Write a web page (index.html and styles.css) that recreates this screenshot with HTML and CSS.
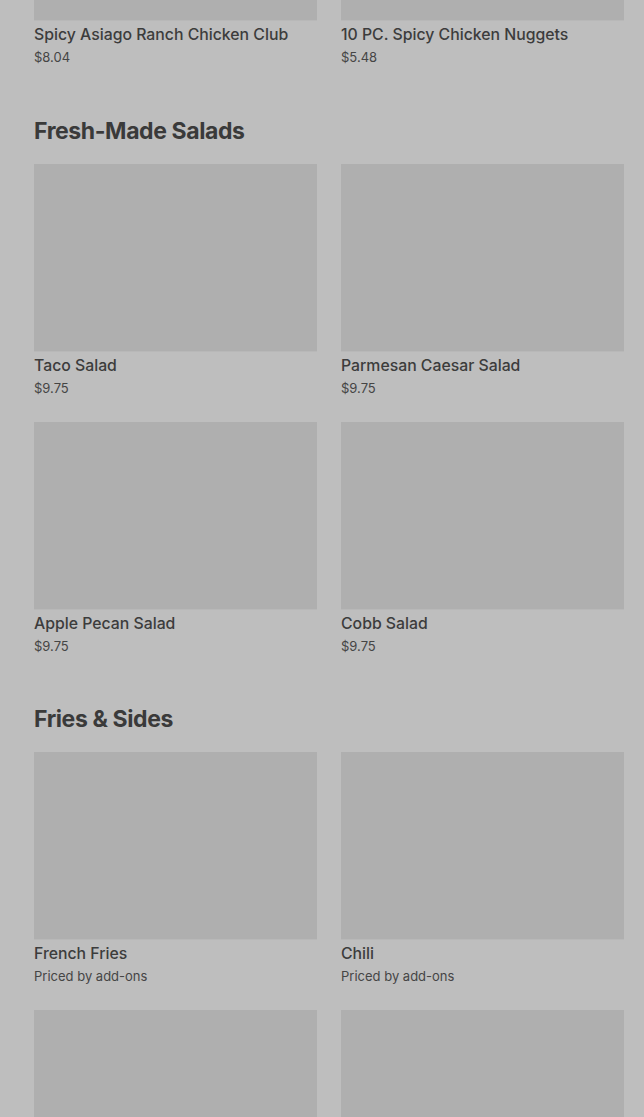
FILE: index.html
```html
<!DOCTYPE html>
<html lang="en">
<head>
  <meta charset="UTF-8">
  <meta name="viewport" content="width=device-width, initial-scale=1.0">
  <title>Menu</title>
  <link rel="stylesheet" href="styles.css">
</head>
<body>
  <div class="menu">
    <section class="section first">
      <div class="grid">
        <div class="item">
          <div class="thumb"></div>
          <h3 class="name">Spicy Asiago Ranch Chicken Club</h3>
          <p class="price">$8.04</p>
        </div>
        <div class="item">
          <div class="thumb"></div>
          <h3 class="name">10 PC. Spicy Chicken Nuggets</h3>
          <p class="price">$5.48</p>
        </div>
      </div>
    </section>

    <section class="section">
      <h2 class="section-title">Fresh-Made Salads</h2>
      <div class="grid">
        <div class="item">
          <div class="thumb"></div>
          <h3 class="name">Taco Salad</h3>
          <p class="price">$9.75</p>
        </div>
        <div class="item">
          <div class="thumb"></div>
          <h3 class="name">Parmesan Caesar Salad</h3>
          <p class="price">$9.75</p>
        </div>
        <div class="item">
          <div class="thumb"></div>
          <h3 class="name">Apple Pecan Salad</h3>
          <p class="price">$9.75</p>
        </div>
        <div class="item">
          <div class="thumb"></div>
          <h3 class="name">Cobb Salad</h3>
          <p class="price">$9.75</p>
        </div>
      </div>
    </section>

    <section class="section">
      <h2 class="section-title">Fries &amp; Sides</h2>
      <div class="grid">
        <div class="item">
          <div class="thumb"></div>
          <h3 class="name">French Fries</h3>
          <p class="price">Priced by add-ons</p>
        </div>
        <div class="item">
          <div class="thumb"></div>
          <h3 class="name">Chili</h3>
          <p class="price">Priced by add-ons</p>
        </div>
        <div class="item">
          <div class="thumb"></div>
          <h3 class="name">Baked Potato</h3>
          <p class="price">Priced by add-ons</p>
        </div>
        <div class="item">
          <div class="thumb"></div>
          <h3 class="name">Side Salad</h3>
          <p class="price">Priced by add-ons</p>
        </div>
      </div>
    </section>
  </div>
</body>
</html>
```

FILE: styles.css
```css
* {
  margin: 0;
  padding: 0;
  box-sizing: border-box;
}

html,
body {
  height: 100%;
  overflow: hidden;
}

body {
  background-color: #bebebe;
  font-family: 'Inter', 'Noto Sans', sans-serif;
  color: #3b3b3b;
}

/* page is shown scrolled part way down the menu */
.menu {
  padding: 0 20px 0 34px;
  margin-top: -167px;
}

.section {
  margin-bottom: 47px;
}

.section.first {
  margin-bottom: 48px;
}

.section-title {
  font-size: 23px;
  font-weight: 700;
  line-height: 32px;
  letter-spacing: -0.4px;
  color: #3a3a3a;
  margin-bottom: 17px;
}

.grid {
  display: grid;
  grid-template-columns: 1fr 1fr;
  column-gap: 24px;
  row-gap: 24px;
}

.thumb {
  height: 188px;
  background-color: #afafaf;
  border-bottom: 1px solid #b8b8b8;
}

.name {
  font-size: 15.8px;
  font-weight: 500;
  line-height: 22px;
  margin-top: 3px;
  color: #3c3c3c;
}

.price {
  font-size: 13px;
  font-weight: 400;
  line-height: 20px;
  margin-top: 1px;
  color: #454545;
}
```
